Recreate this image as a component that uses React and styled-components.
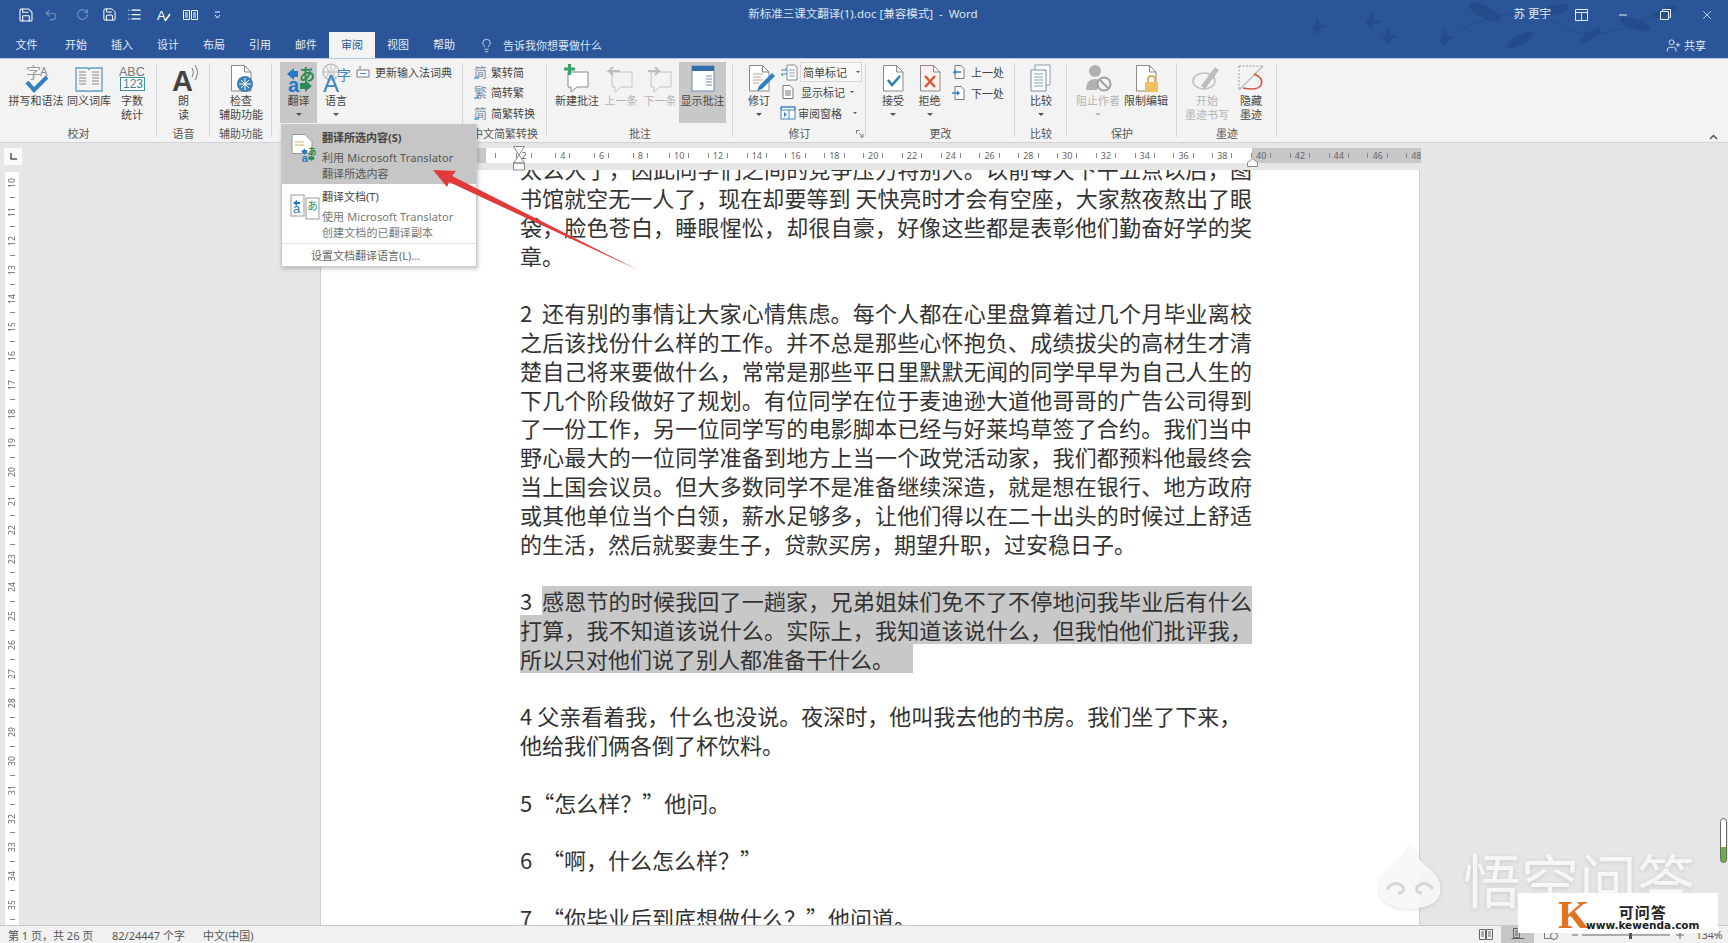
import React from 'react';
import styled, { createGlobalStyle } from 'styled-components';
import { Save, Undo2, RotateCw, Lightbulb, UserPlus, Minus, X, List } from 'lucide-react';

const UI = '"Noto Sans","Noto Sans CJK SC",sans-serif';
const Global = createGlobalStyle`
  html, body { margin: 0; padding: 0; overflow: hidden; background: #e6e6e6; }
  * { box-sizing: border-box; }
  body { font-family: ${UI}; }
`;
const Root = styled.div`
  position: relative; width: 1728px; height: 943px; overflow: hidden;
  display: flex; flex-direction: column; color: #444; font-size: 11px;
`;
/* ---- title ---- */
const Head = styled.header`position: relative; background: #2a5699; color: #e6ecf5; flex: none;`;
const Birds = styled.svg`position: absolute; left: 1290px; top: 0; pointer-events: none;`;
const TitleBar = styled.div`position: relative; display: flex; height: 29px; align-items: center;`;
const Qat = styled.div`display: flex; width: 600px; padding-left: 13px; align-items: center;`;
const QatBtn = styled.span`
  width: ${p => p.$w || 26}px; display: flex; align-items: center; justify-content: center; gap: 2px;
  opacity: ${p => (p.$off ? 0.35 : 1)}; color: #fff;
`;
const Title = styled.div`width: 526px; margin-top: -3px; text-align: center; font-size: 11.5px; color: #dde5f1; white-space: pre;`;
const WinArea = styled.div`flex: 1; display: flex; justify-content: flex-end; align-items: center;`;
const UserName = styled.span`margin: -3px 9px 0 0; font-size: 11.5px; color: #e6ecf5;`;
const WinBtn = styled.span`width: 42px; display: flex; justify-content: center; align-items: center; color: #e6ecf5;`;
const TabBar = styled.nav`position: relative; display: flex; height: 29px; align-items: flex-end;`;
const Tab = styled.div`
  width: ${p => p.$w || 46}px; height: 26px; line-height: 25px; text-align: center; font-size: 11px;
  background: ${p => (p.$on ? '#f3f3f3' : 'transparent')};
  color: ${p => (p.$on ? '#2a5699' : '#e6ecf5')};
`;
const Tell = styled.div`display: flex; align-items: center; gap: 9px; height: 26px; padding-left: 12px; font-size: 11px; color: #dfe6f1;`;
const Share = styled.div`margin-left: auto; display: flex; align-items: center; gap: 3px; height: 26px; padding-right: 22px; font-size: 11px; color: #e6ecf5;`;
/* ---- ribbon ---- */
const Ribbon = styled.section`
  flex: none; height: 85px; display: flex; padding-top: 4px; background: #f3f3f3;
  border-top: 1px solid #b4cbe4; border-bottom: 1px solid #d2d2d2; position: relative;
`;
const Group = styled.div`
  position: relative; width: ${p => p.$w}px; flex: none; display: flex; flex-direction: column; margin-top: -1px;
  &::after { content: ''; position: absolute; right: 0; top: 1px; bottom: 5px; width: 1px; background: #d4d4d4; }
`;
const GroupBody = styled.div`
  height: 61px; display: flex; padding-left: ${p => p.$pad || 0}px;
  justify-content: ${p => (p.$center ? 'center' : 'flex-start')};
`;
const GroupLabel = styled.div`height: 20px; line-height: 21px; text-align: center; font-size: 11px; color: #555; white-space: nowrap;`;
const Launcher = styled.svg`position: absolute; right: 2px; bottom: 4px;`;
const Big = styled.div`
  width: ${p => p.$w}px; height: 61px; flex: none; display: flex; flex-direction: column; align-items: center;
  font-size: 11px; line-height: 14px; text-align: center;
  color: ${p => (p.$off ? '#b4b4b4' : '#444')};
  background: ${p => (p.$on ? '#c8c8c8' : 'transparent')};
  white-space: nowrap;
`;
const Slot = styled.div`height: 32px; flex: none; display: flex; align-items: flex-start; justify-content: center;`;
const Caret = styled.i`
  display: block; margin-top: ${p => p.$mt ?? 5}px; width: 0; height: 0;
  border: 3px solid transparent; border-top-color: ${p => (p.$off ? '#bbb' : '#555')}; border-bottom: 0;
`;
const Col = styled.div`display: flex; flex-direction: column; padding-left: ${p => p.$pl || 0}px;`;
const Small = styled.div`
  height: 20.5px; display: flex; align-items: center; gap: ${p => p.$gap ?? 4}px; white-space: nowrap; font-size: 11px;
  color: ${p => (p.$off ? '#aaa' : '#444')};
`;
const Combo = styled.div`
  width: 62px; height: 20px; border: 1px solid #d8d8d8; background: #f8f8f8; display: flex; align-items: center;
  padding-left: 2px; gap: 9px;
`;
const SmallCaret = styled.i`
  display: block; margin-left: ${p => p.$ml || 0}px; width: 0; height: 0; border: 2.5px solid transparent; border-top-color: #555; border-bottom: 0;
`;
const Collapse = styled.svg`margin: auto 10px 2px auto;`;
/* ---- menu ---- */
const Menu = styled.div`
  position: absolute; left: 281px; top: 124px; width: 196px; height: 143px; background: #fff;
  border: 1px solid #c8c8c8; box-shadow: 1px 2px 4px rgba(0,0,0,.22); z-index: 5;
`;
const MenuItem = styled.div`
  display: flex; height: ${p => p.$h}px; padding-top: 5px;
  background: ${p => (p.$on ? '#c6c6c6' : 'transparent')};
`;
const MenuIcon = styled.div`width: 40px; flex: none; padding: 3px 0 0 8px;`;
const MenuTitle = styled.div`font-size: 11px; line-height: 16px; color: #444; font-weight: ${p => (p.$b ? 700 : 400)}; margin-bottom: 4px;`;
const MenuDesc = styled.div`font-size: 11px; line-height: 16px; letter-spacing: .12px; color: ${p => (p.$on ? '#555' : '#777')}; white-space: nowrap;`;
const MenuRule = styled.div`border-top: 1px solid #e2e2e2; height: 24px; line-height: 23px; padding-left: 29px; font-size: 11px; color: #666;`;
const ArrowMark = styled.svg`position: absolute; left: 0; top: 0; z-index: 6; pointer-events: none;`;
/* ---- rulers ---- */
const RulerRow = styled.div`flex: none; height: 27px; background: #e6e6e6; display: flex; padding: 5px 0 0 4px; position: relative;`;
const Corner = styled.div`
  width: 18px; height: 17px; background: #fafafa; display: flex; align-items: center; justify-content: center;
`;
const HRuler = styled.div`
  margin-left: 455px; width: 944px; height: 15px; display: flex; padding-left: 9px; overflow: hidden;
  background: linear-gradient(to right, #c8c8c8 9px, #fff 9px, #fff 775px, #c8c8c8 775px);
`;
const FirstTick = styled.div`width: 18.6px; flex: none; display: flex; justify-content: center; align-items: center;`;
const RCell = styled.div`width: 38.8px; flex: none; display: flex; align-items: center; justify-content: center; gap: 4px; font-size: 9px; color: #666; line-height: 15px;`;
const Tick = styled.i`display: block; width: 1px; height: 5px; background: #888;`;
const Marker = styled.svg`position: absolute; z-index: 4; left: ${p => p.$x}px; top: ${p => p.$y}px;`;
const Work = styled.div`flex: 1; min-height: 0; display: flex; background: #e6e6e6; padding-left: 5px; overflow: hidden;`;
const VRuler = styled.div`flex: none; width: 14px; margin-top: 2px; background: #fff; overflow: hidden;`;
const VInner = styled.div`margin-top: -3px;`;
const VCell = styled.div`height: 28.9px; display: flex; flex-direction: column; align-items: center; padding-top: 7px; gap: 7px;`;
const VNum = styled.span`height: 14px; writing-mode: vertical-rl; transform: rotate(180deg); font-size: 8.5px; line-height: 14px; text-align: center; color: #666;`;
const VTick = styled.i`display: block; width: 5px; height: 1px; background: #888;`;
/* ---- page ---- */
const Page = styled.main`
  flex: none; width: 1100px; margin-left: 301px; background: #fff; border: solid #cfcfcf; border-width: 0 1px;
  padding-left: 199px; overflow: hidden; font-family: "Noto Sans CJK SC", sans-serif; font-size: 22px; color: #333;
`;
const Flow = styled.div`margin-top: -15.7px; width: 732px;`;
const Line = styled.div`height: 28.8px; line-height: 28.8px; white-space: pre; display: flex;`;
const Run = styled.span`
  flex: ${p => (p.$full ? 1 : 'none')}; min-width: 0; text-align: ${p => (p.$full ? 'justify' : 'left')};
  text-align-last: ${p => (p.$full ? 'justify' : 'left')};
  white-space: ${p => (p.$full ? 'normal' : 'pre')};
  background: ${p => (p.$sel ? '#c8c8c8' : 'transparent')};
  padding-right: ${p => p.$pr || 0}px;
`;
const Num = styled.span`flex: none; width: ${p => p.$w}px;`;
/* ---- status ---- */
const Status = styled.footer`
  flex: none; height: 18px; background: #f1f1f1; border-top: 1px solid #c8c8c8; display: flex; align-items: center;
  font-size: 11px; color: #555; padding-left: 8px; position: relative;
`;
const StatText = styled.span`width: ${p => p.$w}px; flex: none; white-space: nowrap;`;
const StatRight = styled.div`margin-left: auto; display: flex; height: 100%; align-items: center;`;
const View = styled.div`
  width: ${p => p.$w}px; height: 100%; display: flex; align-items: center; justify-content: center;
  background: ${p => (p.$on ? '#c6c6c6' : 'transparent')};
`;
const Pct = styled.span`width: 38px; text-align: center; font-size: 10.5px;`;
/* ---- overlays ---- */
const Mark = styled.div`
  position: absolute; left: 1377px; top: 836px; display: flex; align-items: center; gap: 20px; z-index: 3; pointer-events: none;
  filter: drop-shadow(0 1px 2px rgba(0,0,0,.14));
`;
const MarkText = styled.span`font-family: "Noto Sans CJK SC", sans-serif; font-size: 58px; font-weight: 400; color: rgba(250,250,250,.9); white-space: nowrap; line-height: 84px;`;
const Badge = styled.div`
  position: absolute; left: 1518px; top: 893px; width: 200px; height: 40px; background: #fff; z-index: 4;
  display: flex; padding-left: 40px;
`;
const BadgeK = styled.span`font-family: "Liberation Serif", serif; font-weight: 700; font-size: 40px; line-height: 40px; color: #e0731f; width: 28px; margin-top: 2px;`;
const BadgeCol = styled.div`display: flex; flex-direction: column; align-items: center; padding-top: 10px;`;
const BadgeTop = styled.span`font-family: "Noto Sans CJK SC", sans-serif; font-weight: 700; font-size: 15px; line-height: 17px; color: #222; letter-spacing: 1px;`;
const BadgeUrl = styled.span`font-family: "DejaVu Sans", sans-serif; font-weight: 700; font-size: 10.5px; line-height: 11px; color: #222; white-space: nowrap;`;
const Gadget = styled.div`
  position: absolute; left: 1720px; top: 818px; width: 7px; height: 45px; border: 1.5px solid #666; border-radius: 4px; z-index: 3;
  background: linear-gradient(to bottom, #fff 65%, #6cb33f 65%);
`;

/* ---- icons ---- */
const B = ({ s = 32, children }) => <svg width={s} height={s} viewBox={`0 0 ${s} ${s}`}>{children}</svg>;
const doc = 'M6.5 3.5h13l6.5 6.5v19H6.5zM19.5 3.500V10H26';
const Doc = ({ fill = '#fff' }) => <path d={doc} fill={fill} stroke="#8a8a8a" />;
const SpellIcon = () => <B><text x="6" y="16" fontSize="15" fill="#9a9a9a">字</text><text x="20" y="14" fontSize="12" fill="#888">A</text><path d="M7 20l7 8L27 15" fill="none" stroke="#2f7fc1" strokeWidth="4" /></B>;
const BookIcon = () => <B><path d="M3 6h11q2 0 2 2 0-2 2-2h11v23H18q-2 0-2 1 0-1-2-1H3z" fill="#f4f4f4" stroke="#5f9cc6" strokeWidth="1.3" /><path d="M6 10h7M6 13h7M6 16h7M6 19h7M6 22h7M19 10h7M19 13h7M19 16h7M19 19h7M19 22h7" stroke="#888" /></B>;
const CountIcon = () => <B><text x="3" y="14" fontSize="12.5" fill="#777" fontFamily="Liberation Sans">ABC</text><rect x="4.500" y="15.500" width="24" height="13" fill="#fff" stroke="#3f8fa8" /><text x="7" y="26" fontSize="12" fill="#3f7f98" fontFamily="Liberation Sans">123</text></B>;
const ReadIcon = () => <B><text x="4" y="29" fontSize="29" fontWeight="700" fill="#444" fontFamily="Liberation Sans">A</text><path d="M24 6q3 4 0 9M27 3q5 7 0 15" fill="none" stroke="#777" /></B>;
const A11yIcon = () => <B><Doc /><circle cx="20" cy="22" r="8" fill="#3d80b6" /><path d="M20 16v12M14 22h12M16 18l8 8M24 18l-8 8" stroke="#fff" /></B>;
const Trans = ({ s = 32 }) => <svg width={s} height={s} viewBox="0 0 32 32"><path d="M4 12l7-6v3h4v6h-4v3z" fill="#2479c9" /><text x="16" y="18" fontSize="16" fontWeight="700" fill="#2e8b57">あ</text><text x="5" y="30" fontSize="20" fontWeight="700" fill="#2479c9" fontFamily="Liberation Sans">a</text><path d="M29 24l-7 6v-3h-5v-6h5v-3z" fill="#2e8b57" /></svg>;
const LangIcon = () => <B><circle cx="11" cy="10" r="8" fill="none" stroke="#aaa" /><path d="M3 10h16M11 2v16M6 4q5 6 0 12M16 4q-5 6 0 12" fill="none" stroke="#bbb" /><text x="3" y="30" fontSize="24" fill="#3f86c6" fontFamily="Liberation Sans">A</text><text x="17" y="18" fontSize="14" fill="#3f86c6">字</text></B>;
const Dict = () => <B s={14}><path d="M1 5h12v7H1z" fill="#fff" stroke="#777" /><path d="M4 8.500h6M4 1v3" stroke="#3f86c6" /></B>;
const Conv = ({ c }) => <B s={16}><text x="1" y="13" fontSize="13" fill="#7b8fa6">{c}</text><path d="M1 14h5l-2-2" fill="none" stroke="#3f86c6" /></B>;
const bubble = 'M7 10h20v15H16l-6 5v-5H7z';
const NewC = () => <B><path d={bubble} fill="#fff" stroke="#888" /><path d="M3 7h11M8.500 2v11" stroke="#3aa26a" strokeWidth="3.2" /></B>;
const PrevC = ({ dir }) => <B><path d={bubble} fill="none" stroke="#c4c4c4" /><path d={dir ? 'M4 9h11l-4-4m4 4-4 4' : 'M15 9H4l4-4M4 9l4 4'} fill="none" stroke="#bdbdbd" strokeWidth="2" /></B>;
const ShowC = () => <B><rect x="5" y="4" width="22" height="25" fill="#fff" stroke="#6b8fb3" /><rect x="5" y="4" width="22" height="5" fill="#2f6ea8" /><path d="M19 14h6M19 17h6M19 20h6M19 23h6" stroke="#6b8fb3" /></B>;
const TrackIcon = () => <B><Doc /><path d="M10 12h10M10 15h8M10 18h10M10 21h6" stroke="#c0a0a0" /><path d="M14 29l2-5L29 11l3 3-13 13z" fill="#2f7fc1" /></B>;
const MiniDoc = () => <B s={16}><path d="M3 1.500h7l3 3v10H3z" fill="#fff" stroke="#777" /><path d="M5 7h6M5 9h6M5 11h6" stroke="#777" /></B>;
const Swap = () => <B s={18}><path d="M7 2h8l2 2v13H7z" fill="#fff" stroke="#888" /><path d="M9 7h6M9 10h6M9 13h6" stroke="#999" /><path d="M1 7h6l-2-2M7 11H1l2 2" fill="none" stroke="#3f86c6" /></B>;
const PaneIcon = () => <B s={16}><rect x="1" y="2" width="14" height="12" fill="#fff" stroke="#3f86c6" /><path d="M1 2h14v3H1zM9 5v9" fill="none" stroke="#3f86c6" /><path d="M4 7l3 2.500L4 12z" fill="#3f86c6" /></B>;
const AcceptIcon = () => <B><Doc /><path d="M11 18l4 5 8-9" fill="none" stroke="#2f83a8" strokeWidth="2.6" /></B>;
const RejectIcon = () => <B><Doc fill="#fbf2ef" /><path d="M11 14l10 11M21 14L11 25" stroke="#d95a3c" strokeWidth="2.6" /></B>;
const PrevChg = ({ next }) => <B s={16}><path d="M4 1.500h6l3 3v10H4z" fill="#fff" stroke="#777" /><path d={next ? 'M1 8h7l-2-2m2 2-2 2' : 'M10 8H3l2-2M3 8l2 2'} fill="none" stroke="#2f7fc1" strokeWidth="1.3" /></B>;
const CompareIcon = () => <B><path d="M10 3h15v20H10z" fill="#fff" stroke="#8a9aa8" /><path d="M6 8h15v21H6z" fill="#fff" stroke="#6f8ea8" /><path d="M9 12h9M9 15h9M9 18h9M9 21h9M9 24h9" stroke="#7f9db5" /></B>;
const BlockIcon = () => <B><circle cx="13" cy="9" r="6" fill="#b0b0b0" /><path d="M4 28q0-11 9-11 5 0 6 3l-4 8z" fill="#b0b0b0" /><circle cx="22" cy="22" r="6.500" fill="#f3f3f3" stroke="#a0a0a0" strokeWidth="2" /><path d="M18 18l8 8" stroke="#a0a0a0" strokeWidth="2" /></B>;
const LockIcon = () => <B><Doc /><path d="M18 20v-3q0-3 3.500-3t3.500 3v3" fill="none" stroke="#d8b060" strokeWidth="2" /><rect x="15" y="20" width="13" height="10" fill="#efc25f" /></B>;
const InkIcon = () => <B><ellipse cx="13" cy="19" rx="11" ry="8" fill="none" stroke="#c0c0c0" strokeWidth="1.5" /><path d="M10 24L24 5l4 3-14 19z" fill="#bdbdbd" /></B>;
const HideInk = () => <B><path d="M4 4h24M4 4v24" stroke="#999" strokeDasharray="2 1.5" fill="none" /><path d="M4 28L28 4" stroke="#bbb" strokeWidth="1.5" /><path d="M19 12q10 4 7 11-3 6-18 3" fill="none" stroke="#d2593a" strokeWidth="1.6" /></B>;
const MenuDocT = () => <B><path d="M2 1.500h13l7 7v12H2z" fill="#fff" stroke="#9a9a9a" /><path d="M5 9h9M5 12h9" stroke="#d9b25e" /><g transform="translate(9 12) scale(.55)"><Trans /></g></B>;
const MenuDocB = () => <B><rect x="1" y="3" width="13" height="21" fill="#fff" stroke="#9a9a9a" /><rect x="16" y="6" width="13" height="21" fill="#fff" stroke="#9a9a9a" /><text x="3" y="21" fontSize="13" fill="#2479c9" fontFamily="Liberation Sans">a</text><path d="M3 11l4-3v2h3v2H7v2z" fill="#2479c9" /><text x="17" y="18" fontSize="11" fill="#2e8b57">あ</text></B>;

const tabs = ['开始', '插入', '设计', '布局', '引用', '邮件', '审阅', '视图', '帮助'];
const evens = Array.from({ length: 24 }, (_, i) => (i + 1) * 2);
const vnums = Array.from({ length: 27 }, (_, i) => i + 10);

const doc1 = [
  ['太么大了，因此同学们之间的竞争压力特别大。以前每天下午五点以后，图', 1],
  ['书馆就空无一人了，现在却要等到 天快亮时才会有空座，大家熬夜熬出了眼', 1],
  ['袋，脸色苍白，睡眼惺忪，却很自豪，好像这些都是表彰他们勤奋好学的奖', 1],
  ['章。', 0], [' ', 0],
];
const doc1b = [
  ['之后该找份什么样的工作。并不总是那些心怀抱负、成绩拔尖的高材生才清', 1],
  ['楚自己将来要做什么，常常是那些平日里默默无闻的同学早早为自己人生的', 1],
  ['下几个阶段做好了规划。有位同学在位于麦迪逊大道他哥哥的广告公司得到', 1],
  ['了一份工作，另一位同学写的电影脚本已经与好莱坞草签了合约。我们当中', 1],
  ['野心最大的一位同学准备到地方上当一个政党活动家，我们都预料他最终会', 1],
  ['当上国会议员。但大多数同学不是准备继续深造，就是想在银行、地方政府', 1],
  ['或其他单位当个白领，薪水足够多，让他们得以在二十出头的时候过上舒适', 1],
  ['的生活，然后就娶妻生子，贷款买房，期望升职，过安稳日子。', 0], [' ', 0],
];
const doc2 = [
  [' ', 0],
  ['4 父亲看着我，什么也没说。夜深时，他叫我去他的书房。我们坐了下来，', 0],
  ['他给我们俩各倒了杯饮料。', 0], [' ', 0],
  ['5“怎么样？”他问。', 0], [' ', 0],
  ['6  “啊，什么怎么样？”', 0], [' ', 0],
  ['7  “你毕业后到底想做什么？”他问道。', 0],
];
const Lines = ({ rows }) => rows.map(([t, f], i) => <Line key={i}><Run $full={!!f}>{t}</Run></Line>);

export default function App() {
  return (
    <Root lang="zh-CN">
      <Global />
      <Head>
        <Birds width="400" height="58" viewBox="0 0 400 58">
          <g fill="#234c8b">
            <path d="M22 28l6-10 2 7 5 1-5 3-2 6z" /><path d="M76 24l6-14 2 9 7 3-7 2-3 5z" /><path d="M92 40l6-12 3 7 6 2-6 2-2 6z" /><path d="M150 42l5-14 3 8 7 2-7 2-3 6z" />
            <ellipse cx="195" cy="12" rx="18" ry="6" transform="rotate(25 195 12)" /><ellipse cx="230" cy="40" rx="14" ry="5" transform="rotate(-30 230 40)" />
            <ellipse cx="265" cy="10" rx="14" ry="5" transform="rotate(-15 265 10)" /><ellipse cx="300" cy="36" rx="13" ry="4" transform="rotate(-35 300 36)" />
            <ellipse cx="345" cy="24" rx="16" ry="5" transform="rotate(20 345 24)" /><ellipse cx="375" cy="12" rx="12" ry="4" transform="rotate(-25 375 12)" />
          </g>
          <path d="M170 30q60-30 100-5t110-20" fill="none" stroke="#234c8b" />
        </Birds>
        <TitleBar>
          <Qat>
            <QatBtn><Save size={16} strokeWidth={1.6} /></QatBtn>
            <QatBtn $w={30} $off><Undo2 size={14} /><SmallCaret /></QatBtn>
            <QatBtn $w={27} $off><RotateCw size={13} /></QatBtn>
            <QatBtn><Save size={15} strokeWidth={1.6} /></QatBtn>
            <QatBtn $w={30}><List size={15} /><SmallCaret /></QatBtn>
            <QatBtn $w={24}><svg width="16" height="16" viewBox="0 0 16 16"><text x="1" y="13" fontSize="13" fill="#fff" fontFamily="Liberation Sans">A</text><path d="M9 14l5-7" stroke="#fff" strokeWidth="1.5" /></svg></QatBtn>
            <QatBtn $w={28}><svg width="15" height="12" viewBox="0 0 15 12"><path d="M.5 1.500h6v9h-6zM8.500 1.500h6v9h-6zM2 4h3M2 6h3M2 8h3M10 4h3M10 6h3M10 8h3" fill="none" stroke="#fff" /></svg></QatBtn>
            <QatBtn $w={26}><svg width="7" height="8" viewBox="0 0 7 8"><path d="M1 1h5M1 4l2.500 3L6 4" fill="none" stroke="#fff" /></svg></QatBtn>
          </Qat>
          <Title>新标准三课文翻译(1).doc [兼容模式]  -  Word</Title>
          <WinArea>
            <UserName>苏 更宇</UserName>
            <WinBtn><svg width="13" height="12" viewBox="0 0 13 12"><path d="M.5.500h12v11H.5zM.5 3.500h12M6.500 3.500v8" fill="none" stroke="#e6ecf5" /></svg></WinBtn>
            <WinBtn><Minus size={12} /></WinBtn>
            <WinBtn><svg width="11" height="11" viewBox="0 0 11 11"><path d="M.5 2.500h8v8h-8zM2.500 2.500v-2h8v8h-2" fill="none" stroke="#e6ecf5" /></svg></WinBtn>
            <WinBtn><X size={14} strokeWidth={1.4} /></WinBtn>
          </WinArea>
        </TitleBar>
        <TabBar>
          <Tab $w={53}>文件</Tab>
          {tabs.map(t => <Tab key={t} $on={t === '审阅'}>{t}</Tab>)}
          <Tell><Lightbulb size={15} strokeWidth={1.3} />告诉我你想要做什么</Tell>
          <Share><UserPlus size={15} strokeWidth={1.4} />共享</Share>
        </TabBar>
      </Head>

      <Ribbon>
        <Group $w={157}>
          <GroupBody $pad={8}>
            <Big $w={56}><Slot><SpellIcon /></Slot>拼写和语法</Big>
            <Big $w={50}><Slot><BookIcon /></Slot>同义词库</Big>
            <Big $w={36}><Slot><CountIcon /></Slot>字数<br />统计</Big>
          </GroupBody>
          <GroupLabel>校对</GroupLabel>
        </Group>
        <Group $w={53}>
          <GroupBody $center><Big $w={32}><Slot><ReadIcon /></Slot>朗<br />读</Big></GroupBody>
          <GroupLabel>语音</GroupLabel>
        </Group>
        <Group $w={62}>
          <GroupBody $center><Big $w={50}><Slot><A11yIcon /></Slot>检查<br />辅助功能</Big></GroupBody>
          <GroupLabel>辅助功能</GroupLabel>
        </Group>
        <Group $w={191}>
          <GroupBody $pad={8}>
            <Big $w={37} $on><Slot><Trans /></Slot>翻译<Caret /></Big>
            <Big $w={38}><Slot><LangIcon /></Slot>语言<Caret /></Big>
            <Col $pl={1}><Small $gap={5}><Dict />更新输入法词典</Small></Col>
          </GroupBody>
          <GroupLabel />
        </Group>
        <Group $w={84}>
          <GroupBody $pad={10}>
            <Col>
              <Small $gap={2}><Conv c="简" />繁转简</Small>
              <Small $gap={2}><Conv c="繁" />简转繁</Small>
              <Small $gap={2}><Conv c="简" />简繁转换</Small>
            </Col>
          </GroupBody>
          <GroupLabel>中文简繁转换</GroupLabel>
        </Group>
        <Group $w={186}>
          <GroupBody $pad={6}>
            <Big $w={48}><Slot><NewC /></Slot>新建批注</Big>
            <Big $w={40} $off><Slot><PrevC /></Slot>上一条</Big>
            <Big $w={38} $off><Slot><PrevC dir /></Slot>下一条</Big>
            <Big $w={47} $on><Slot><ShowC /></Slot>显示批注</Big>
          </GroupBody>
          <GroupLabel>批注</GroupLabel>
        </Group>
        <Group $w={133}>
          <GroupBody $pad={9}>
            <Big $w={34}><Slot><TrackIcon /></Slot>修订<Caret /></Big>
            <Col $pl={4}>
              <Small $gap={2}><Swap /><Combo>简单标记<SmallCaret /></Combo></Small>
              <Small $gap={5}><MiniDoc />显示标记<SmallCaret /></Small>
              <Small $gap={2}><PaneIcon />审阅窗格<SmallCaret $ml={9} /></Small>
            </Col>
          </GroupBody>
          <GroupLabel>修订</GroupLabel>
          <Launcher width="8" height="8" viewBox="0 0 8 8"><path d="M.5.500h3M.5.500v3M7 7L3 3M7 4v3H4" fill="none" stroke="#777" /></Launcher>
        </Group>
        <Group $w={149}>
          <GroupBody $pad={9}>
            <Big $w={36}><Slot><AcceptIcon /></Slot>接受<Caret /></Big>
            <Big $w={37}><Slot><RejectIcon /></Slot>拒绝<Caret /></Big>
            <Col $pl={3}>
              <Small><PrevChg />上一处</Small>
              <Small><PrevChg next />下一处</Small>
            </Col>
          </GroupBody>
          <GroupLabel>更改</GroupLabel>
        </Group>
        <Group $w={52}>
          <GroupBody $center><Big $w={40}><Slot><CompareIcon /></Slot>比较<Caret /></Big></GroupBody>
          <GroupLabel>比较</GroupLabel>
        </Group>
        <Group $w={110}>
          <GroupBody $pad={7}>
            <Big $w={48} $off><Slot><BlockIcon /></Slot>阻止作者<Caret $off /></Big>
            <Big $w={48}><Slot><LockIcon /></Slot>限制编辑</Big>
          </GroupBody>
          <GroupLabel>保护</GroupLabel>
        </Group>
        <Group $w={100}>
          <GroupBody $pad={6}>
            <Big $w={48} $off><Slot><InkIcon /></Slot>开始<br />墨迹书写</Big>
            <Big $w={40}><Slot><HideInk /></Slot>隐藏<br />墨迹</Big>
          </GroupBody>
          <GroupLabel>墨迹</GroupLabel>
        </Group>
        <Collapse width="9" height="6" viewBox="0 0 9 6"><path d="M1 5l3.500-3.500L8 5" fill="none" stroke="#555" strokeWidth="1.5" /></Collapse>
      </Ribbon>

      <RulerRow>
        <Corner><svg width="9" height="9" viewBox="0 0 9 9"><path d="M2 1v6h6" fill="none" stroke="#555" strokeWidth="1.5" /></svg></Corner>
        <HRuler>
          <FirstTick><Tick /></FirstTick>
          {evens.map(n => <RCell key={n}><Tick />{n}<Tick /></RCell>)}
        </HRuler>
      </RulerRow>

      <Work>
        <VRuler><VInner>
          {vnums.map(n => <VCell key={n}><VNum>{n}</VNum><VTick /></VCell>)}
        </VInner></VRuler>
        <Page>
          <Flow>
            <Lines rows={doc1} />
            <Line><Num $w={22}>2</Num><Run $full>还有别的事情让大家心情焦虑。每个人都在心里盘算着过几个月毕业离校</Run></Line>
            <Lines rows={doc1b} />
            <Line><Num $w={22}>3</Num><Run $full $sel>感恩节的时候我回了一趟家，兄弟姐妹们免不了不停地问我毕业后有什么</Run></Line>
            <Line><Run $full $sel>打算，我不知道该说什么。实际上，我知道该说什么，但我怕他们批评我，</Run></Line>
            <Line><Run $sel $pr={19}>所以只对他们说了别人都准备干什么。</Run></Line>
            <Lines rows={doc2} />
          </Flow>
        </Page>
      </Work>

      <Status>
        <StatText $w={104}>第 1 页，共 26 页</StatText>
        <StatText $w={91}>82/24447 个字</StatText>
        <StatText $w={60}>中文(中国)</StatText>
        <StatRight>
          <View $w={31}><svg width="14" height="13" viewBox="0 0 14 13"><path d="M.5 1.500h6v10h-6zM7.500 1.500h6v10h-6zM2 4h3M2 6h3M2 8h3M9 4h3M9 6h3M9 8h3" fill="none" stroke="#666" /></svg></View>
          <View $w={33} $on><svg width="14" height="13" viewBox="0 0 14 13"><path d="M2.500.500h6v9h-6zM.5 10.500h13M4 3h3M4 5h3M4 7h3" fill="none" stroke="#666" /></svg></View>
          <View $w={34}><svg width="14" height="11" viewBox="0 0 14 11"><path d="M.5 1.500h9v8h-9z" fill="none" stroke="#777" /><circle cx="10" cy="7" r="3.500" fill="#f1f1f1" stroke="#666" /></svg></View>
          <svg width="122" height="16" viewBox="0 0 122 16"><path d="M4 8h6M14 8h88M108 8h8M112 4v8" stroke="#666" /><rect x="61" y="5" width="3" height="7" fill="#555" /></svg>
          <Pct>134%</Pct>
        </StatRight>
      </Status>

      <Marker $x={513} $y={146} width="12" height="25" viewBox="0 0 12 25">
        <path d="M.5.500h11L6 9zM6 9l5.500 8h-11zM.5 17h11v7H.5z" fill="#fbfbfb" stroke="#8a8a8a" />
      </Marker>
      <Marker $x={1247} $y={158} width="11" height="9" viewBox="0 0 11 9">
        <path d="M5.500.500l5 4v4h-10v-4z" fill="#fbfbfb" stroke="#8a8a8a" />
      </Marker>

      <Menu>
        <MenuItem $h={59} $on>
          <MenuIcon><MenuDocT /></MenuIcon>
          <div>
            <MenuTitle $b>翻译所选内容(S)</MenuTitle>
            <MenuDesc $on>利用 Microsoft Translator</MenuDesc>
            <MenuDesc $on>翻译所选内容</MenuDesc>
          </div>
        </MenuItem>
        <MenuItem $h={59}>
          <MenuIcon><MenuDocB /></MenuIcon>
          <div>
            <MenuTitle>翻译文档(T)</MenuTitle>
            <MenuDesc>使用 Microsoft Translator</MenuDesc>
            <MenuDesc>创建文档的已翻译副本</MenuDesc>
          </div>
        </MenuItem>
        <MenuRule>设置文档翻译语言(L)...</MenuRule>
      </Menu>

      <ArrowMark width="1728" height="943" viewBox="0 0 1728 943">
        <polygon points="433,170 456,171 452,176 638,270 449,182 447,187" fill="#e2393b" />
      </ArrowMark>

      <Mark>
        <svg width="66" height="70" viewBox="0 0 66 70">
          <path d="M33 2q6 14 20 24 12 10 10 24-2 14-30 16Q5 64 3 50 1 36 13 26 27 16 33 2z" fill="#fafafa" fillOpacity=".9" />
          <path d="M10 46q8-10 16-2 2 6-5 6M56 46q-8-10-16-2-2 6 5 6" fill="none" stroke="#d6d6d6" strokeWidth="3" />
        </svg>
        <MarkText>悟空问答</MarkText>
      </Mark>
      <Gadget />
      <Badge>
        <BadgeK>K</BadgeK>
        <BadgeCol>
          <BadgeTop>可问答</BadgeTop>
          <BadgeUrl>www.kewenda.com</BadgeUrl>
        </BadgeCol>
      </Badge>
    </Root>
  );
}
